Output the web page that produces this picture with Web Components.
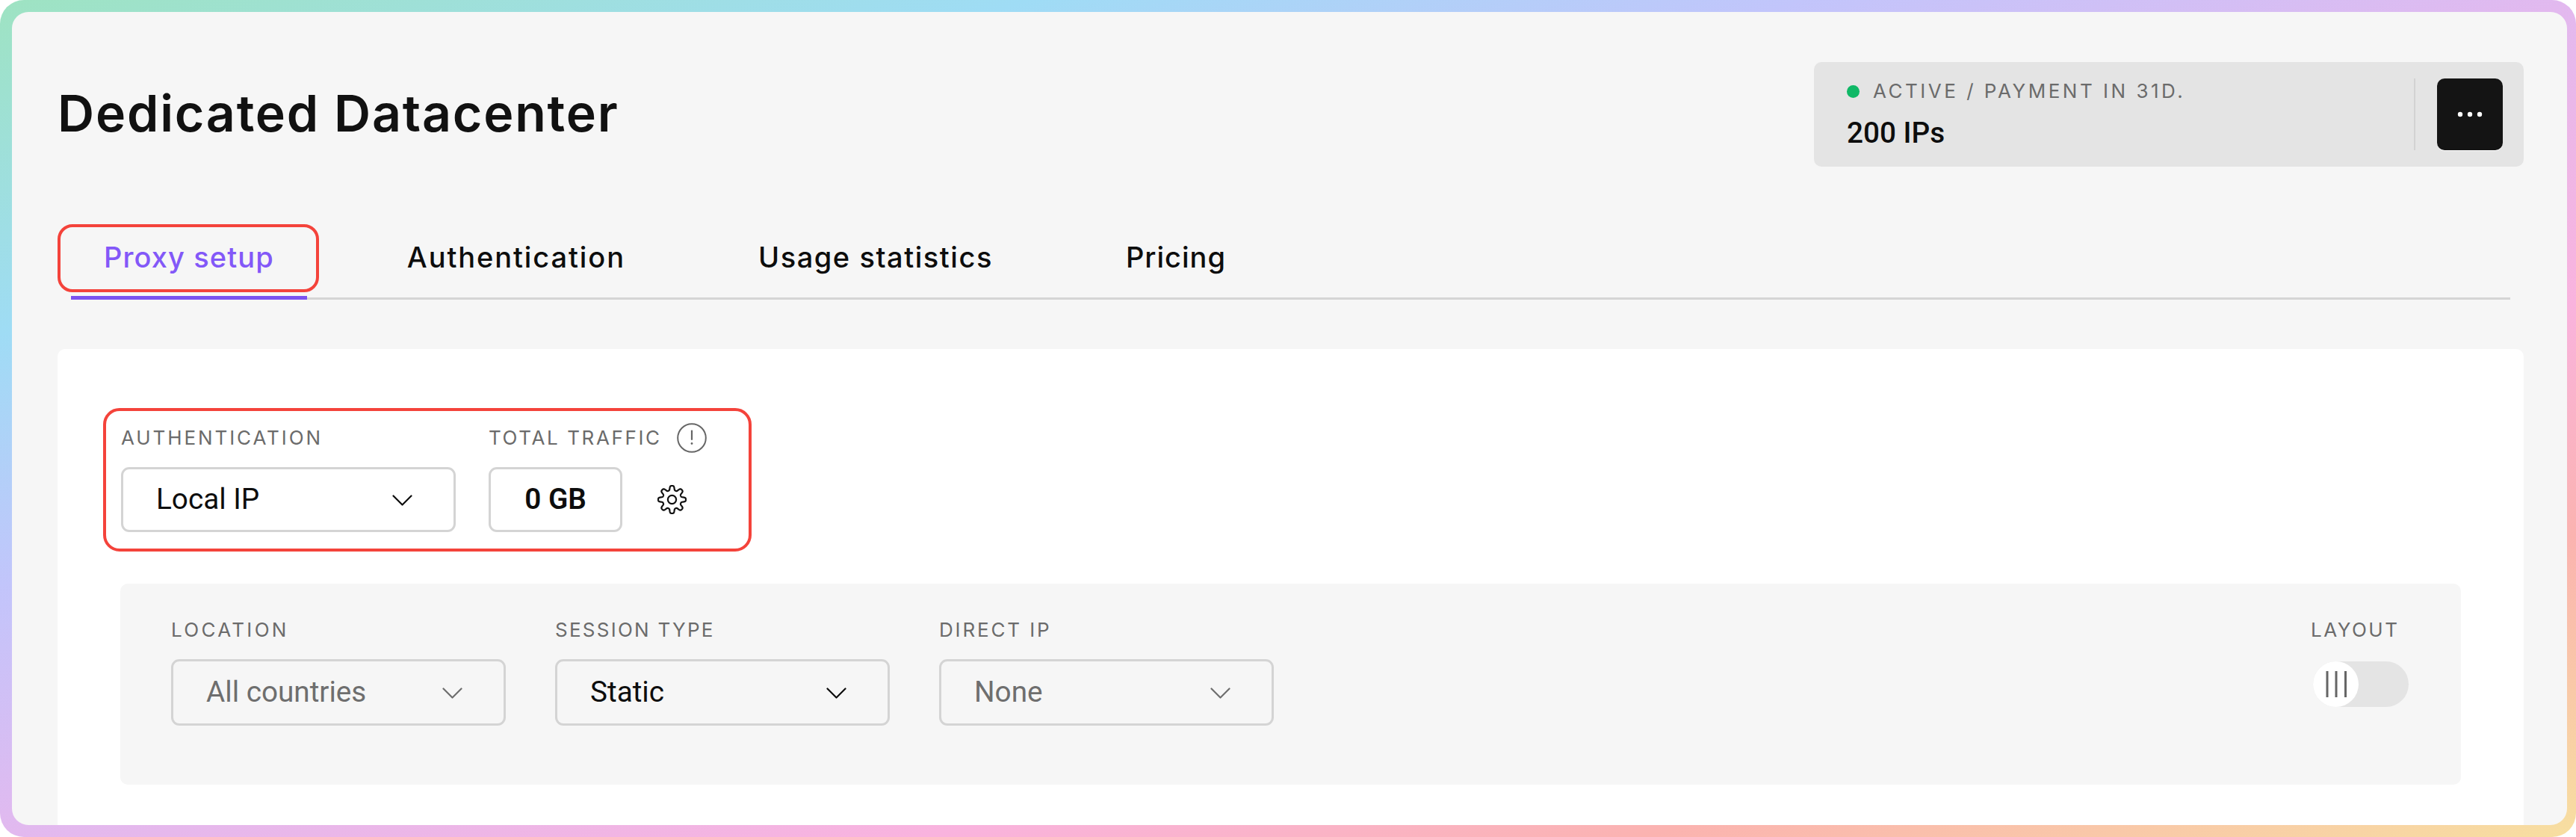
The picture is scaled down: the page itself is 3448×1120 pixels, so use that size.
<!DOCTYPE html>
<html lang="en"><head><meta charset="utf-8"><title>Dedicated Datacenter</title>
<style>html,body{margin:0;padding:0;background:#fff;overflow:hidden}</style></head><body>
<x-frame>
  <x-header heading="Dedicated Datacenter">
    <x-status text="ACTIVE / PAYMENT IN 31D." count="200 IPs"></x-status>
  </x-header>
  <x-tabs>
    <x-tab active highlight ls="1.1">Proxy setup</x-tab>
    <x-tab ls="1.9">Authentication</x-tab>
    <x-tab ls="1.55">Usage statistics</x-tab>
    <x-tab ls="1">Pricing</x-tab>
  </x-tabs>
  <x-card>
    <x-highlight>
      <x-field label="AUTHENTICATION" ls="2.9"><x-select value="Local IP"></x-select></x-field>
      <x-field label="TOTAL TRAFFIC" ls="2.6" info><x-traffic value="0 GB"></x-traffic></x-field>
    </x-highlight>
    <x-panel>
      <x-field label="LOCATION" ls="3.3" tight><x-select value="All countries" muted tall></x-select></x-field>
      <x-field label="SESSION TYPE" ls="2.25" tight><x-select value="Static" tall></x-select></x-field>
      <x-field label="DIRECT IP" ls="2.85" tight><x-select value="None" muted tall></x-select></x-field>
      <x-layout-toggle slot="end"></x-layout-toggle>
    </x-panel>
  </x-card>
</x-frame>
<script>
const LABEL='font:400 26px/40px Inter,"Liberation Sans",sans-serif;color:#6b6b6b;white-space:nowrap;';
function def(name,html){
  customElements.define(name,class extends HTMLElement{
    constructor(){super();
      const a=n=>this.getAttribute(n);
      const s=this.attachShadow({mode:'open'});
      s.innerHTML=typeof html==='function'?html(a,this):html;
    }
  });
}
const chevron=c=>`<svg width="27" height="15" viewBox="0 0 27 15" fill="none" stroke="${c}" stroke-width="2.2" stroke-linecap="round" stroke-linejoin="round"><path d="M1.5 1.5 13.5 13.5 25.5 1.5"/></svg>`;
function gearPath(){
  const pts=[],cx=19.5,cy=19.5,k=Math.tanh(1.9);
  for(let i=0;i<240;i++){
    const t=i/240*Math.PI*2-Math.PI/2;
    const r=15.6+2.9*Math.tanh(1.9*Math.cos(8*(t+Math.PI/2)))/k;
    pts.push((cx+r*Math.cos(t)).toFixed(2)+' '+(cy+r*Math.sin(t)).toFixed(2));
  }
  return 'M'+pts.join('L')+'Z';
}
def('x-frame',`<style>
:host{display:block;box-sizing:border-box;height:1120px;padding:16px 12px 16px 16px;border-radius:32px;
background:linear-gradient(to bottom right,#9ee3c2 0%,#9fdcf5 20%,#c2c5fb 35%,#e2b9ef 50%,#f9b3de 68%,#fbb3b0 82%,#f7dfa0 100%)}
.in{height:1088px;box-sizing:border-box;background:#f6f6f6;border-radius:22px;overflow:hidden;padding:67px 58px 0 61px}
</style><div class="in"><slot></slot></div>`);
def('x-header',a=>`<style>
:host{display:flex;justify-content:space-between;align-items:center}
h1{margin:0 0 3px;font:560 68px/1.2 Inter,"Liberation Sans",sans-serif;letter-spacing:1.8px;color:#111}
</style><h1>${a('heading')}</h1><slot></slot>`);
def('x-status',a=>`<style>
:host{display:flex;box-sizing:border-box;width:950px;height:140px;background:#e4e4e4;border-radius:10px;padding:22px 28px 22px 44px;align-items:stretch}
.txt{flex:1;display:flex;flex-direction:column;justify-content:space-between}
.top{display:flex;align-items:center;gap:18px;height:40px;margin-top:-3px;${LABEL}letter-spacing:3.5px}
.dot{width:17px;height:17px;border-radius:50%;background:#0fb866}
.n{font:500 38.7px/45px Roboto,sans-serif;color:#0d0d0d;margin-bottom:1px}
.div{width:2px;background:#d2d2d2;margin-right:29px}
.btn{width:88px;background:#141414;border-radius:10px;box-shadow:0 1px 0 #fff;display:flex;align-items:center;justify-content:center}
</style><div class="txt"><div class="top"><span class="dot"></span><span>${a('text')}</span></div><div class="n">${a('count')}</div></div>
<div class="div"></div><div class="btn"><svg width="34" height="8" viewBox="0 0 34 8" fill="#fff"><circle cx="4" cy="4" r="3.2"/><circle cx="17" cy="4" r="3.2"/><circle cx="30" cy="4" r="3.2"/></svg></div>`);
def('x-tabs',`<style>:host{display:flex;gap:90px;margin:76px 18px 0;border-bottom:3px solid #d5d5d5}</style><slot></slot>`);
def('x-tab',(a,el)=>`<style>
:host{display:block;position:relative;margin-bottom:-3px;padding:16px 44px 23px;border-bottom:5px solid ${el.hasAttribute('active')?'#7b52f0':'transparent'};
font:520 38px/58px Inter,"Liberation Sans",sans-serif;letter-spacing:${a('ls')}px;white-space:nowrap;color:${el.hasAttribute('active')?'#8358f8':'#0d0d0d'}}
.hl{position:absolute;left:-18px;right:-16px;top:1px;bottom:5px;border:4px solid #f4433b;border-radius:20px}
</style><slot></slot>${el.hasAttribute('highlight')?'<div class="hl"></div>':''}`);
def('x-card',`<style>:host{display:block;background:#fff;border-radius:10px 10px 0 0;margin-top:66px;height:700px;padding:79px 84px 0 84px}</style><slot></slot>`);
def('x-highlight',`<style>:host{display:flex;width:868px;box-sizing:border-box;margin-left:-23px;border:4px solid #f4433b;border-radius:22px;padding:14px 58px 22px 20px;gap:44px}</style><slot></slot>`);
def('x-panel',`<style>:host{display:flex;box-sizing:border-box;height:269px;margin-top:43px;background:#f6f6f6;border-radius:10px;padding:42px 70px 0 68px;gap:66px}
.end{margin-left:auto}</style><slot></slot><div class="end"><slot name="end"></slot></div>`);
def('x-field',(a,el)=>{const t=el.hasAttribute('tight');return `<style>
:host{display:flex;flex-direction:column;gap:${t?19:19}px}
.l{display:flex;align-items:center;gap:20px;height:40px;margin-top:${t?0:2}px;${LABEL}letter-spacing:${a('ls')}px}
</style><div class="l"><span>${a('label')}</span>${el.hasAttribute('info')?`<svg width="40" height="40" viewBox="0 0 40 40" fill="none" stroke="#666"><circle cx="20" cy="20" r="18.8" stroke-width="2"/><path d="M20 10.5V22" stroke-width="2.2" stroke-linecap="round"/><circle cx="20" cy="27.5" r="1.4" fill="#666" stroke="none"/></svg>`:''}</div><slot></slot>`});
def('x-select',(a,el)=>{const m=el.hasAttribute('muted'),c=m?'#6e6e6e':'#0d0d0d';return `<style>
:host{display:flex;align-items:center;justify-content:space-between;box-sizing:border-box;width:448px;height:${el.hasAttribute('tall')?89:87}px;border:3px solid #d4d4d4;border-radius:11px;padding:0 55px 0 44px;
font:400 38.7px/1 Roboto,sans-serif;color:${c}}
svg{margin-top:2px}
</style><span>${a('value')}</span>${chevron(c)}`});
def('x-traffic',(a)=>`<style>
:host{display:flex;align-items:center;gap:47px}
.b{box-sizing:border-box;width:179px;height:87px;border:3px solid #d4d4d4;border-radius:11px;display:flex;align-items:center;justify-content:center;font:600 38.7px/1 Roboto,sans-serif;color:#0d0d0d}
</style><div class="b">${a('value')}</div><svg width="39" height="39" viewBox="0 0 39 39" fill="none" stroke="#111" stroke-width="2.2" stroke-linejoin="round"><path d="${gearPath()}"/><circle cx="19.5" cy="19.5" r="5.6"/></svg>`);
def('x-layout-toggle',`<style>
:host{display:flex;flex-direction:column;gap:22px;width:131px;${LABEL}letter-spacing:2.5px}
.t{margin-left:3px;width:128px;height:61px;border-radius:31px;background:#e4e4e4}
.k{width:61px;height:61px;border-radius:50%;background:#fff;display:flex;align-items:center;justify-content:center}
</style><div>LAYOUT</div><div class="t"><div class="k"><svg width="28" height="35" viewBox="0 0 28 35" stroke="#666" stroke-width="3"><path d="M2 0V35M14 0V35M26.5 0V35"/></svg></div></div>`);
</script>
</body></html>
